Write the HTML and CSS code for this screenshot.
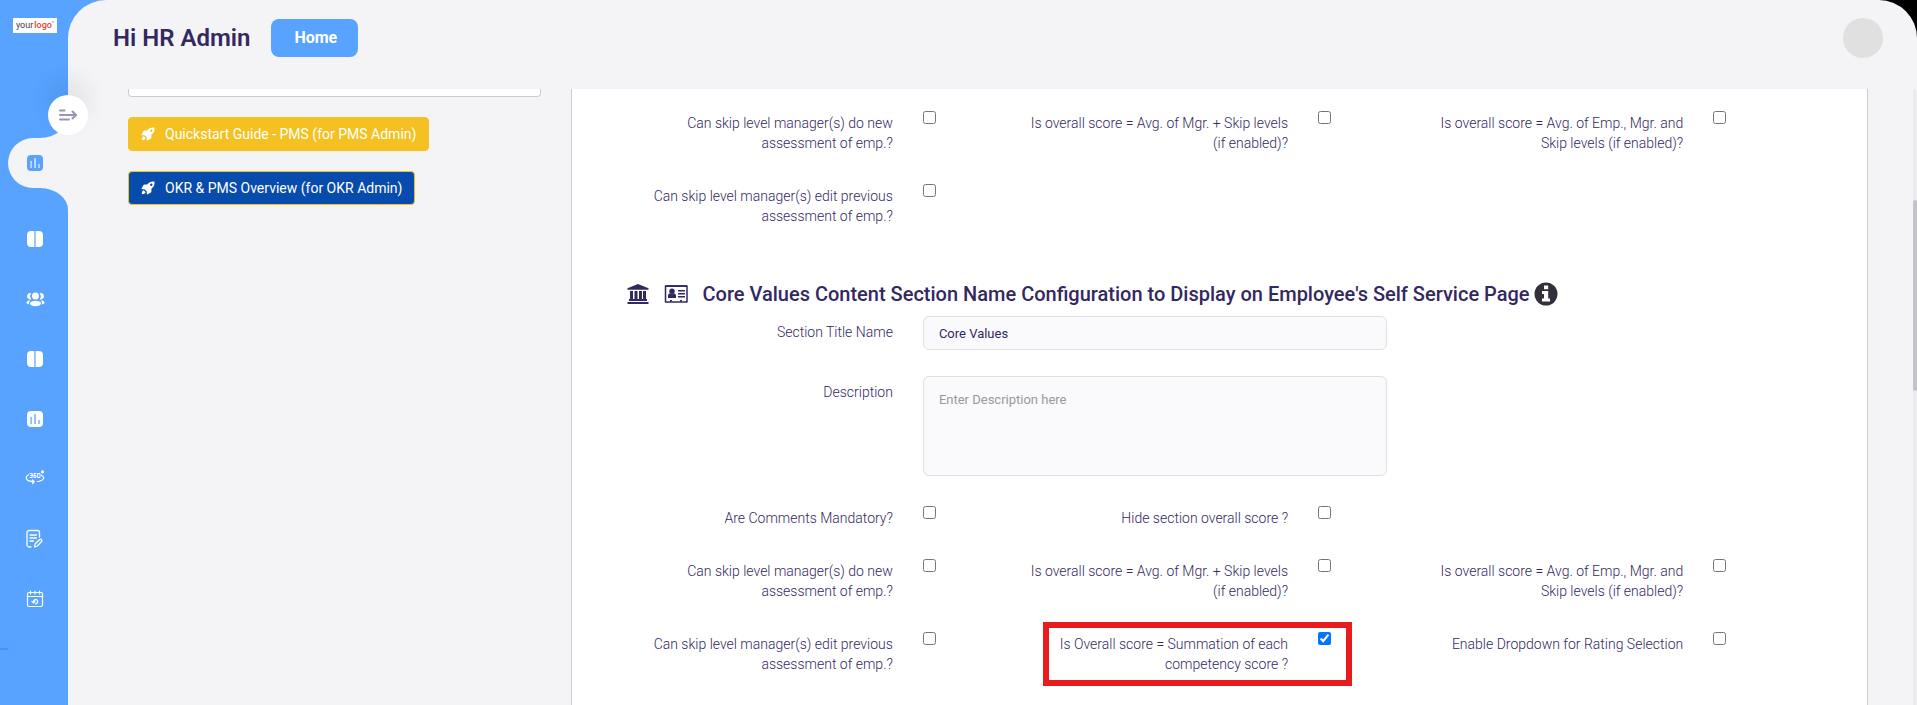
FILE: index.html
```html
<!DOCTYPE html>
<html lang="en">

<head>
    <meta charset="utf-8">
    <meta name="viewport" content="width=device-width, initial-scale=1.0">
    <title>HR Admin</title>
    <link rel="stylesheet" href="styles.css">
</head>

<body>
    <!-- icons used more than once -->
    <svg class="sprite" aria-hidden="true">
        <symbol id="icon-columns" viewBox="0 0 18 18">
            <path fill="currentColor" d="M5 1h3.4v16H5a4 4 0 0 1-4-4V5a4 4 0 0 1 4-4zM9.6 1H13a4 4 0 0 1 4 4v8a4 4 0 0 1-4 4H9.6z"/>
        </symbol>
        <symbol id="icon-chart" viewBox="0 0 18 18">
            <path fill="currentColor" fill-rule="evenodd" d="M5 1h8a4 4 0 0 1 4 4v8a4 4 0 0 1-4 4H5a4 4 0 0 1-4-4V5a4 4 0 0 1 4-4zM4.5 7v7h1.2V7zM8.4 4v10h1.3V4zM12.4 10v4h1.2v-4z"/>
        </symbol>
        <symbol id="icon-rocket" viewBox="0 0 14 14">
            <path fill="currentColor" fill-rule="evenodd" d="M13.4.5C10.300 0 8 1.200 6.200 3.600H3.400c-.4 0-.7.2-.9.5L.4 7.800l.4.4h2.700l2.300 2.300v2.700l.5.4 3.600-2.100c.3-.2.5-.5.5-.9V7.800c2.400-1.800 3.600-4.200 3-7.300zM10.300 2.500a1.200 1.200 0 1 1 0 2.400 1.200 1.200 0 0 1 0-2.400zM2.700 9.300C1.400 9.600.8 11.300.8 13.200c1.900 0 3.600-.6 3.900-1.900z"/>
        </symbol>
    </svg>

    <div class="wrapper">
        <nav class="sidebar" aria-label="Main menu">
            <a href="#" class="logo">your<span>logo</span><i>°</i></a>
            <button type="button" class="toggle" aria-label="Expand menu">
                <svg width="20" height="14" viewBox="0 0 20 14" fill="none" stroke="#9a93b2" stroke-width="2" stroke-linecap="round">
                    <path d="M2 2.500h4.500M2 7h15.500M2 11.500h9M14.500 3.500L18 7l-3.500 3.500"/>
                </svg>
            </button>
            <svg class="notch" width="68" height="100" viewBox="0 0 68 100" aria-hidden="true">
                <path fill="#f4f4f7" d="M68 5A28 23 0 0 1 40 28H33A25 25 0 0 0 33 78H40A28 22 0 0 1 68 100z"/>
            </svg>
            <ul class="menu">
                <li class="active"><a href="#" aria-label="Dashboard"><svg width="18" height="18"><use href="#icon-chart"/></svg></a></li>
                <li><a href="#" aria-label="Goals"><svg width="18" height="18"><use href="#icon-columns"/></svg></a></li>
                <li><a href="#" aria-label="Team">
                    <svg width="20" height="18" viewBox="0 0 20 18" fill="currentColor">
                        <circle cx="10.500" cy="6" r="3.500"/>
                        <ellipse cx="10.500" cy="13.500" rx="5.500" ry="2.700"/>
                        <path d="M6.300 3.200a5 5 0 0 0 0 6A3.200 3.200 0 1 1 6.300 3.200zM14.700 3.200a5 5 0 0 1 0 6A3.200 3.200 0 1 0 14.700 3.200zM5.500 10.600c-1.500 1-1.700 2.500-1.200 3.800-2-.2-3-1-2.800-2.100.2-1.200 2-1.800 4-1.700zM15.500 10.600c1.500 1 1.700 2.500 1.200 3.800 2-.2 3-1 2.800-2.100-.2-1.200-2-1.800-4-1.700z"/>
                    </svg></a></li>
                <li><a href="#" aria-label="Reviews"><svg width="18" height="18"><use href="#icon-columns"/></svg></a></li>
                <li><a href="#" aria-label="Reports"><svg width="18" height="18"><use href="#icon-chart"/></svg></a></li>
                <li><a href="#" aria-label="360 feedback">
                    <svg width="20" height="18" viewBox="0 2 20 18" fill="none" stroke="currentColor" stroke-width="1.200" stroke-linecap="round">
                        <path d="M3.500 6.800C0 8.800.6 12 5 13.200c1.200.3 2.400.5 4 .5M7.500 12l1.700 1.700-1.700 1.800M16.500 7.200c3.500 2 2.600 5-2 6-.6.2-1.300.3-2 .3"/>
                        <path stroke-width="1" d="M5 5.500h2.200v4H5M5.500 7.500h1.700M11 5.500H9v4h2v-2H9M13 5.500h2v4h-2z"/>
                        <circle cx="17.500" cy="3.800" r="1" fill="currentColor"/>
                    </svg></a></li>
                <li><a href="#" aria-label="Notes">
                    <svg width="18" height="20" viewBox="0 0 18 20" fill="none" stroke="currentColor" stroke-width="1.300" stroke-linecap="round" stroke-linejoin="round">
                        <path d="M5 18H3a2 2 0 0 1-2-2V3.500a2 2 0 0 1 2-2h8.500a2 2 0 0 1 2 2V8M4 6h6.500M4 9h6.500M4 12h3.500"/>
                        <path d="M8.500 18l.7-3.200 4.500-4.300c1.400-.8 2.700.5 2 1.800l-4.300 4.700z"/>
                    </svg></a></li>
                <li><a href="#" aria-label="Calendar">
                    <svg width="18" height="18" viewBox="0 0 18 18" fill="none" stroke="currentColor" stroke-width="1.200" stroke-linecap="round">
                        <rect x="1.500" y="2.500" width="15" height="14" rx="1.500"/>
                        <path d="M4.500 1v3M9 1v3M13.500 1v3M2 6.500h14M6 11.500l1.500 1.300L9 11M7.500 12.500c-.2-2.500 1.800-3.700 3.300-2.700 1.700 1.200.8 4-1.300 4"/>
                    </svg></a></li>
            </ul>
            <span class="menu-line"></span>
        </nav>

        <div class="main">
            <header class="header">
                <h1>Hi HR Admin</h1>
                <a href="#" class="btn-home">Home</a>
                <button type="button" class="avatar" aria-label="Account"></button>
            </header>

            <div class="content">
                <aside class="left">
                    <div class="panel"></div>
                    <a href="#" class="btn btn-yellow"><svg width="14" height="14"><use href="#icon-rocket"/></svg>Quickstart Guide - PMS (for PMS Admin)</a>
                    <a href="#" class="btn btn-blue"><svg width="14" height="14"><use href="#icon-rocket"/></svg>OKR &amp; PMS Overview (for OKR Admin)</a>
                </aside>

                <form class="card">
                    <div class="row">
                        <div class="field">
                            <label for="p1">Can skip level manager(s) do new assessment of emp.?</label>
                            <input type="checkbox" id="p1">
                        </div>
                        <div class="field">
                            <label for="p2">Is overall score = Avg. of Mgr. + Skip levels (if enabled)?</label>
                            <input type="checkbox" id="p2">
                        </div>
                        <div class="field">
                            <label for="p3">Is overall score = Avg. of Emp., Mgr. and Skip levels (if enabled)?</label>
                            <input type="checkbox" id="p3">
                        </div>
                    </div>
                    <div class="row">
                        <div class="field">
                            <label for="p4">Can skip level manager(s) edit previous assessment of emp.?</label>
                            <input type="checkbox" id="p4">
                        </div>
                    </div>

                    <h2>
                        <svg width="22" height="22" viewBox="0 0 22 22" fill="currentColor" aria-hidden="true">
                            <path d="M11 1l10.500 4.200v1.600H.5V5.200zM3 8h3v8.500H3zM7.500 8h3v8.500h-3zM12 8h3v8.500h-3zM16 8h3v8.500h-3zM2 16h18v2H2zM.5 19h21v2H.5z"/>
                        </svg>
                        <svg width="24" height="22" viewBox="0 0 24 22" aria-hidden="true">
                            <path fill="none" stroke="currentColor" stroke-width="1.500" stroke-linejoin="round" d="M1.500 3h21.500v16H1.500z"/>
                            <path fill="currentColor" d="M1.500 2.300h21.500v1.700H1.500zM4 15v-2c0-1.800 1-2.700 2.300-2.700L8 11.200l1.700-.9c1.300 0 2.300.9 2.300 2.700v2zM14 7h7v1.400h-7zM14 10h7v1.400h-7zM14 13h7v1.400h-7zM6 17h2v1.500H6zM16 17h2v1.500h-2z"/>
                            <circle cx="8" cy="8.200" r="2.700" fill="currentColor"/>
                        </svg>
                        <span>Core Values Content Section Name Configuration to Display on Employee's Self Service Page</span>
                        <svg class="info" width="24" height="24" viewBox="0 0 24 24" aria-hidden="true">
                            <circle cx="12" cy="12" r="11.500" fill="#33303c"/>
                            <path fill="#fff" d="M10 3.500h4.200v3.800H10zM8 9h6.200v7.500H16v3H8v-3h2v-4.600H8z"/>
                        </svg>
                    </h2>

                    <div class="row">
                        <label class="wide-label" for="title">Section Title Name</label>
                        <input class="control" type="text" id="title" value="Core Values">
                    </div>
                    <div class="row">
                        <label class="wide-label" for="desc">Description</label>
                        <textarea class="control" id="desc" placeholder="Enter Description here"></textarea>
                    </div>
                    <div class="row">
                        <div class="field">
                            <label for="c1">Are Comments Mandatory?</label>
                            <input type="checkbox" id="c1">
                        </div>
                        <div class="field">
                            <label for="c2">Hide section overall score ?</label>
                            <input type="checkbox" id="c2">
                        </div>
                    </div>
                    <div class="row">
                        <div class="field">
                            <label for="c3">Can skip level manager(s) do new assessment of emp.?</label>
                            <input type="checkbox" id="c3">
                        </div>
                        <div class="field">
                            <label for="c4">Is overall score = Avg. of Mgr. + Skip levels (if enabled)?</label>
                            <input type="checkbox" id="c4">
                        </div>
                        <div class="field">
                            <label for="c5">Is overall score = Avg. of Emp., Mgr. and Skip levels (if enabled)?</label>
                            <input type="checkbox" id="c5">
                        </div>
                    </div>
                    <div class="row">
                        <div class="field">
                            <label for="c6">Can skip level manager(s) edit previous assessment of emp.?</label>
                            <input type="checkbox" id="c6">
                        </div>
                        <div class="field highlight">
                            <label for="c7">Is Overall score = Summation of each competency score ?</label>
                            <input type="checkbox" id="c7" checked>
                        </div>
                        <div class="field">
                            <label for="c8">Enable Dropdown for Rating Selection</label>
                            <input type="checkbox" id="c8">
                        </div>
                    </div>
                </form>

                <div class="scrollbar"><span></span></div>
            </div>
        </div>
    </div>
</body>

</html>
```
FILE: styles.css
```css
*,
*::after {
    box-sizing: border-box;
}

body {
    margin: 0;
    background: #000;
    color: #33285f;
    font-family: Roboto, "Liberation Sans", sans-serif;
    font-size: 14px;
    line-height: 20px;
    overflow: hidden;
}

a {
    color: inherit;
    text-decoration: none;
}

.sprite {
    display: none;
}

.wrapper {
    display: flex;
    height: 100vh;
}

/* sidebar */
.sidebar {
    position: relative;
    flex: none;
    width: 68px;
    padding-top: 18px;
    background: #57a3ff;
    /* fills the area behind the rounded corner of .main */
    box-shadow: 40px 0 0 #57a3ff;
}

.logo {
    display: block;
    width: 44px;
    height: 15px;
    margin: 0 auto 0 13px;
    background: #fff;
    color: #444;
    font-size: 9px;
    line-height: 14px;
    text-align: center;
    white-space: nowrap;
}

.logo span {
    margin-left: 1px;
    color: #e0452f;
    font-weight: 500;
}

.logo i {
    font-size: 6px;
    font-style: normal;
    vertical-align: top;
    line-height: 10px;
}

.toggle {
    position: absolute;
    top: 95px;
    left: 48px;
    z-index: 3;
    display: flex;
    align-items: center;
    justify-content: center;
    width: 40px;
    height: 40px;
    padding: 0;
    border: 0;
    border-radius: 50%;
    background: #fff;
    box-shadow: 0 -16px 24px rgba(0, 0, 0, 0.08);
}

.notch {
    position: absolute;
    top: 110px;
    left: 0;
}

.menu {
    position: relative;
    margin: 105px 0 0;
    padding: 0;
    list-style: none;
}

.menu a {
    display: flex;
    align-items: center;
    justify-content: center;
    height: 60px;
    padding-left: 2px;
    color: #fff;
}

.menu .active a {
    height: 50px;
    margin-bottom: 21px;
    color: #57a3ff;
}

.menu-line {
    position: absolute;
    top: 648px;
    left: 0;
    width: 8px;
    height: 2px;
    background: #3d95ff;
}

/* page */
.main {
    position: relative;
    z-index: 1;
    display: flex;
    flex-direction: column;
    flex: 1;
    min-width: 0;
    background: #f4f4f7;
    border-radius: 38px 38px 0 0;
}

.header {
    display: flex;
    align-items: center;
    flex: none;
    height: 89px;
    padding: 0 34px 13px 45px;
}

.header h1 {
    margin: 0 21px 0 0;
    font-size: 24px;
    line-height: 28px;
    font-weight: 600;
}

.btn-home {
    padding: 9px 21px 9px 23px;
    border-radius: 8px;
    background: #57a3ff;
    color: #fff;
    font-size: 16px;
    font-weight: 700;
}

.avatar {
    width: 40px;
    height: 40px;
    margin-left: auto;
    border: 0;
    border-radius: 50%;
    background: #e0e0e0;
}

.content {
    position: relative;
    display: grid;
    grid-template-columns: 25% 75%;
    flex: 1;
    min-height: 0;
    padding: 0 34px 0 45px;
    overflow: hidden;
}

.left {
    display: flex;
    flex-direction: column;
    align-items: flex-start;
    gap: 20px;
    padding: 0 15px;
}

.panel {
    width: 100%;
    height: 8px;
    border: 1px solid #ccc;
    border-top: 0;
    border-radius: 0 0 4px 4px;
    background: #fff;
}

.btn {
    display: flex;
    align-items: center;
    gap: 10px;
    padding: 6px 12px;
    border: 1px solid #f4c022;
    border-radius: 4px;
    color: #fff;
}

.btn-yellow {
    background: #f4c022;
}

.btn-blue {
    background: #074bac;
}

.card {
    margin: 0 15px;
    padding: 18px 70px 0 40px;
    border: 1px solid #ccc;
    border-width: 0 1px;
    background: #fff;
}

.card h2 {
    display: flex;
    align-items: center;
    margin: 55px 0 10px;
    padding-left: 15px;
    font-size: 20px;
    line-height: 24px;
    font-weight: 500;
    white-space: nowrap;
}

.card h2 svg {
    flex: none;
    margin-right: 15px;
}

.card h2 .info {
    margin: 0 0 0 4px;
}

.row {
    display: grid;
    grid-template-columns: repeat(12, 1fr);
    align-items: start;
    margin-bottom: 26px;
}

.field {
    position: relative;
    display: grid;
    grid-template-columns: 3fr 1fr;
    grid-column: span 4;
    align-items: start;
}

.field label,
.wide-label {
    padding: 6px 15px 1px;
    font-weight: 300;
    text-align: right;
}

.wide-label {
    grid-column: span 3;
}

.field input {
    width: 13px;
    height: 13px;
    margin: 4px 15px 0;
}

.control {
    grid-column: span 5;
    height: 34px;
    margin: 0 15px;
    padding: 6px 15px;
    border: 1px solid #e0e0e0;
    border-radius: 6px;
    outline: none;
    background: #fafafc;
    color: #33285f;
    font-family: inherit;
    font-size: 13px;
    line-height: 20px;
}

textarea.control {
    height: 100px;
    padding-top: 13px;
    resize: none;
}

.control::placeholder {
    color: #999;
}

.highlight::after {
    content: "";
    position: absolute;
    top: -6px;
    left: 36px;
    right: 50px;
    height: 64px;
    border: 6px solid #e81c1c;
    pointer-events: none;
}

.scrollbar {
    position: absolute;
    top: 0;
    right: 0;
    bottom: 0;
    width: 4px;
    border-radius: 4px 4px 0 0;
    background: #ebebef;
}

.scrollbar span {
    display: block;
    height: 191px;
    margin-top: 111px;
    border-radius: 4px;
    background: #c4c2cc;
}
```
